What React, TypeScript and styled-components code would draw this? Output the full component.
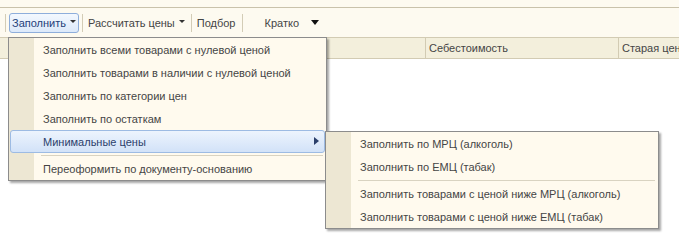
import React from 'react';
import styled, { createGlobalStyle } from 'styled-components';

const GlobalStyle = createGlobalStyle`
  html, body {
    margin: 0;
    padding: 0;
    background: #ffffff;
  }
  body {
    font-family: 'Liberation Sans', Arial, sans-serif;
    font-size: 11px;
    color: #454545;
  }
`;

const Page = styled.div`
  position: relative;
  width: 679px;
  height: 242px;
  overflow: hidden;
  background: #ffffff;
`;

const TopStrip = styled.div`
  height: 7px;
  background: #fdfaf0;
  border-bottom: 1px solid #c9c2ab;
`;

const Toolbar = styled.div`
  display: flex;
  align-items: center;
  height: 29px;
  padding-left: 5px;
  background: #fdfaf0;
`;

const Sep = styled.div<{ $gap?: number }>`
  width: 1px;
  height: 18px;
  background: #d3ccb6;
  margin: 0 ${p => p.$gap ?? 2}px 0 0;
`;

const ToolButton = styled.div<{ $active?: boolean }>`
  display: flex;
  align-items: center;
  gap: 4px;
  height: 18px;
  padding: 0 2px;
  margin-right: 3px;
  border: 1px solid ${p => (p.$active ? '#8eaedb' : 'transparent')};
  border-radius: 3px;
  background: ${p => (p.$active ? 'linear-gradient(#f3f8fe, #dce9fa)' : 'transparent')};
  color: ${p => (p.$active ? '#24407a' : '#454545')};
  white-space: nowrap;
`;

const SmallArrow = styled.span`
  width: 0;
  height: 0;
  border-left: 3px solid transparent;
  border-right: 3px solid transparent;
  border-top: 3px solid #333;
  margin-top: -2px;
`;

const BigArrow = styled.span`
  width: 0;
  height: 0;
  border-left: 4px solid transparent;
  border-right: 4px solid transparent;
  border-top: 5px solid #111;
  margin-left: 8px;
`;

const HeaderRow = styled.div`
  display: grid;
  grid-template-columns: 425px 193px 1fr;
  height: 20px;
  background: #f3efdc;
  border-top: 1px solid #d2cbb3;
  border-bottom: 1px solid #d2cbb3;
`;

const HeaderCell = styled.div`
  display: flex;
  align-items: center;
  padding-left: 3px;
  border-left: 1px solid #d2cbb3;
  white-space: nowrap;
  overflow: hidden;
  &:first-child { border-left: none; }
`;

const Menu = styled.div<{ $left: number; $top: number; $width: number }>`
  position: absolute;
  left: ${p => p.$left}px;
  top: ${p => p.$top}px;
  width: ${p => p.$width}px;
  box-sizing: border-box;
  border: 1px solid #8c8c8c;
  padding: 0 1px;
  background: linear-gradient(to right, #ede7d3 0, #ede7d3 25px, #fffaee 25px);
  box-shadow: 2px 2px 2px rgba(0, 0, 0, 0.35);
`;

const Item = styled.div<{ $hot?: boolean }>`
  position: relative;
  display: flex;
  align-items: center;
  height: 23px;
  box-sizing: border-box;
  padding-left: 32px;
  white-space: nowrap;
  color: ${p => (p.$hot ? '#2c3f6c' : '#454545')};
  border: 1px solid ${p => (p.$hot ? '#9dbbe3' : 'transparent')};
  border-radius: 3px;
  background: ${p => (p.$hot ? 'linear-gradient(#edf4fd, #d2e2f8)' : 'transparent')};
`;

const SubArrow = styled.span`
  position: absolute;
  right: 5px;
  top: 6px;
  width: 0;
  height: 0;
  border-top: 4px solid transparent;
  border-bottom: 4px solid transparent;
  border-left: 5px solid #2b3f6b;
`;

const MenuSep = styled.div`
  height: 4px;
  display: flex;
  align-items: center;
  padding-left: 31px;
  &::after {
    content: '';
    flex: 1;
    height: 1px;
    background: #d9d3c1;
    margin-right: 2px;
  }
`;

export default function App() {
  return (
    <Page>
      <GlobalStyle />
      <TopStrip />
      <Toolbar>
        <Sep $gap={3} />
        <ToolButton $active>
          Заполнить <SmallArrow />
        </ToolButton>
        <Sep />
        <ToolButton>
          Рассчитать цены <SmallArrow />
        </ToolButton>
        <Sep />
        <ToolButton>Подбор</ToolButton>
        <Sep $gap={19} />
        <ToolButton>
          Кратко <BigArrow />
        </ToolButton>
      </Toolbar>
      <HeaderRow>
        <HeaderCell />
        <HeaderCell>Себестоимость</HeaderCell>
        <HeaderCell>Старая цена</HeaderCell>
      </HeaderRow>

      <Menu $left={8} $top={37} $width={319}>
        <Item>Заполнить всеми товарами с нулевой ценой</Item>
        <Item>Заполнить товарами в наличии с нулевой ценой</Item>
        <Item>Заполнить по категории цен</Item>
        <Item>Заполнить по остаткам</Item>
        <Item $hot>
          Минимальные цены
          <SubArrow />
        </Item>
        <MenuSep />
        <Item>Переоформить по документу-основанию</Item>
      </Menu>

      <Menu $left={325} $top={131} $width={334}>
        <Item>Заполнить по МРЦ (алкоголь)</Item>
        <Item>Заполнить по ЕМЦ (табак)</Item>
        <MenuSep />
        <Item>Заполнить товарами с ценой ниже МРЦ (алкоголь)</Item>
        <Item>Заполнить товарами с ценой ниже ЕМЦ (табак)</Item>
      </Menu>
    </Page>
  );
}
